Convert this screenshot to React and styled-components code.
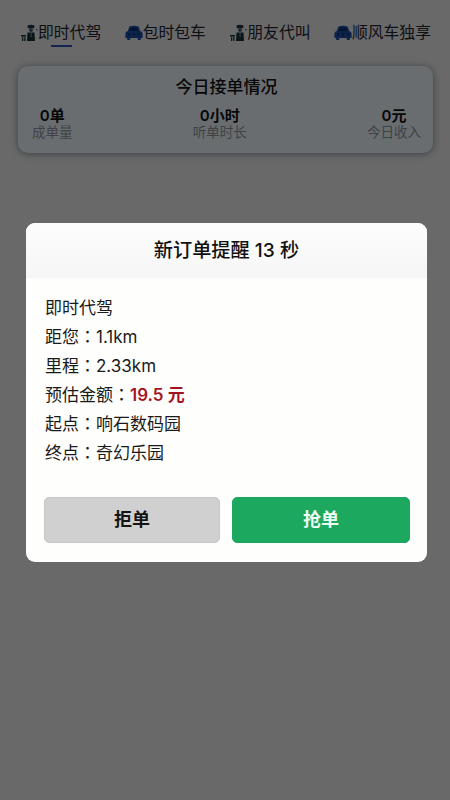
import React from 'react';
import styled, { createGlobalStyle } from 'styled-components';

const GlobalStyle = createGlobalStyle`
  html, body {
    margin: 0;
    padding: 0;
    background: #eeeeee;
  }
  * {
    box-sizing: border-box;
  }
`

const Page = styled.div`
  position: relative;
  width: 450px;
  height: 800px;
  overflow: hidden;
  background: #eeeeee;
  font-family: "Inter", "Noto Sans CJK SC", sans-serif;
  color: #111;
`

const Tabs = styled.div`
  display: flex;
  justify-content: space-between;
  padding: 22px 19px 0 20px;
`

const Tab = styled.div`
  position: relative;
  display: flex;
  align-items: center;
  height: 22px;
  font-size: 15.8px;
  line-height: 22px;
  color: #1f2733;
`

const TabLine = styled.span`
  position: absolute;
  left: 31px;
  top: 23px;
  width: 21px;
  height: 2px;
  background: #2f50b8;
`

const Card = styled.div`
  margin: 22px 17px 0 18px;
  height: 87px;
  padding: 9px 12px 0 14px;
  border-radius: 10px;
  background: #eef9ff;
  box-shadow: 0 1px 7px rgba(30, 50, 70, 0.5);
`

const CardTitle = styled.div`
  text-align: center;
  font-size: 17px;
  line-height: 24px;
  font-weight: 500;
`

const Stats = styled.div`
  display: flex;
  justify-content: space-between;
  margin-top: 8px;
`

const Stat = styled.div`
  display: flex;
  flex-direction: column;
  align-items: center;
`

const StatValue = styled.div`
  font-size: 15px;
  line-height: 17px;
  font-weight: 600;
`

const StatLabel = styled.div`
  font-size: 13.5px;
  line-height: 16px;
  color: #8f979e;
`

const Overlay = styled.div`
  position: absolute;
  inset: 0;
  display: flex;
  justify-content: center;
  align-items: flex-start;
  padding-top: 223px;
  background: rgba(0, 0, 0, 0.56);
`

const Modal = styled.div`
  width: 401px;
  margin-left: 3px;
  border-radius: 9px;
  overflow: hidden;
  background: #fefefc;
`

const ModalHeader = styled.div`
  height: 55px;
  background: linear-gradient(#fdfdfd, #f6f6f6);
  border-bottom: 1px solid #f4f4f4;
  text-align: center;
  font-size: 19.2px;
  line-height: 55px;
  font-weight: 500;
`

const ModalBody = styled.div`
  padding: 16px 19px 0;
  font-size: 17px;
  line-height: 29px;
  color: #1a1a1a;
`

const Colon = styled.span`
  font-family: "Noto Sans CJK TC", sans-serif;
  line-height: 1;
`

const Amount = styled.span`
  color: #a3141f;
  font-weight: 600;
`

const Buttons = styled.div`
  display: flex;
  gap: 12px;
  margin-top: 29px;
  padding: 0 17px 19px 18px;
`

const Button = styled.div`
  flex: ${(p) => (p.$primary ? '0 0 178px' : '0 0 176px')};
  height: 46px;
  border-radius: 5px;
  text-align: center;
  font-size: 18px;
  line-height: 44px;
  font-weight: 600;
  background: ${(p) => (p.$primary ? '#1da85f' : '#d0d0d0')};
  border: 1px solid ${(p) => (p.$primary ? '#1da85f' : '#c8c8c8')};
  color: ${(p) => (p.$primary ? '#effff4' : '#151515')};
`

const DriverIcon = () => (
  <svg width="18" height="18" viewBox="0 0 18 18" aria-hidden="true">
    <path d="M7.5 1.5 Q11 0 14.5 1.5 L14.2 4.2 H7.8 Z" fill="#223444" />
    <circle cx="11" cy="6" r="2" fill="#4a6772" />
    <path d="M7.5 8.5 H14.5 L15 17 H7 Z" fill="#16323a" />
    <path d="M10.5 8.5 H11.7 L11.5 13.5 H10.7 Z" fill="#8a9fa3" />
    <path d="M1 11 H6 V12.6 H1 Z" fill="#16323a" />
    <path d="M2 13.2 H3.3 V17 H2 Z M4.2 13.2 H5.5 V17 H4.2 Z" fill="#16323a" />
    <rect x="16" y="5" width="1.4" height="1.4" fill="#4a6772" />
  </svg>
)

const CarIcon = () => (
  <svg width="18" height="18" viewBox="0 0 18 18" aria-hidden="true">
    <path
      d="M4.4 2.4 Q9 1 13.6 2.4 L15.2 7 Q17.6 7.6 17.6 9.6 V14 H15.8 V16 H12.8 V14 H5.2 V16 H2.2 V14 H.4 V9.6 Q.4 7.6 2.8 7 Z"
      fill="#1c4fa8"
    />
    <path d="M5.6 4 Q9 3.1 12.4 4 L13.3 6.8 H4.7 Z" fill="#0f2f6c" />
    <circle cx="4" cy="10.4" r="1.1" fill="#0f2f6c" />
    <circle cx="9" cy="10.4" r="1.1" fill="#0f2f6c" />
    <circle cx="14" cy="10.4" r="1.1" fill="#0f2f6c" />
  </svg>
)

const App = () => (
  <Page>
    <GlobalStyle />
    <Tabs>
      <Tab>
        <DriverIcon />
        即时代驾
        <TabLine />
      </Tab>
      <Tab>
        <CarIcon />
        包时包车
      </Tab>
      <Tab>
        <DriverIcon />
        朋友代叫
      </Tab>
      <Tab>
        <CarIcon />
        顺风车独享
      </Tab>
    </Tabs>
    <Card>
      <CardTitle>今日接单情况</CardTitle>
      <Stats>
        <Stat>
          <StatValue>0单</StatValue>
          <StatLabel>成单量</StatLabel>
        </Stat>
        <Stat>
          <StatValue>0小时</StatValue>
          <StatLabel>听单时长</StatLabel>
        </Stat>
        <Stat>
          <StatValue>0元</StatValue>
          <StatLabel>今日收入</StatLabel>
        </Stat>
      </Stats>
    </Card>
    <Overlay>
      <Modal>
        <ModalHeader>新订单提醒 13 秒</ModalHeader>
        <ModalBody>
          <div>即时代驾</div>
          <div>距您<Colon>：</Colon>1.1km</div>
          <div>里程<Colon>：</Colon>2.33km</div>
          <div>预估金额<Colon>：</Colon><Amount>19.5 元</Amount></div>
          <div>起点<Colon>：</Colon>响石数码园</div>
          <div>终点<Colon>：</Colon>奇幻乐园</div>
        </ModalBody>
        <Buttons>
          <Button>拒单</Button>
          <Button $primary>抢单</Button>
        </Buttons>
      </Modal>
    </Overlay>
  </Page>
);

export default App;
